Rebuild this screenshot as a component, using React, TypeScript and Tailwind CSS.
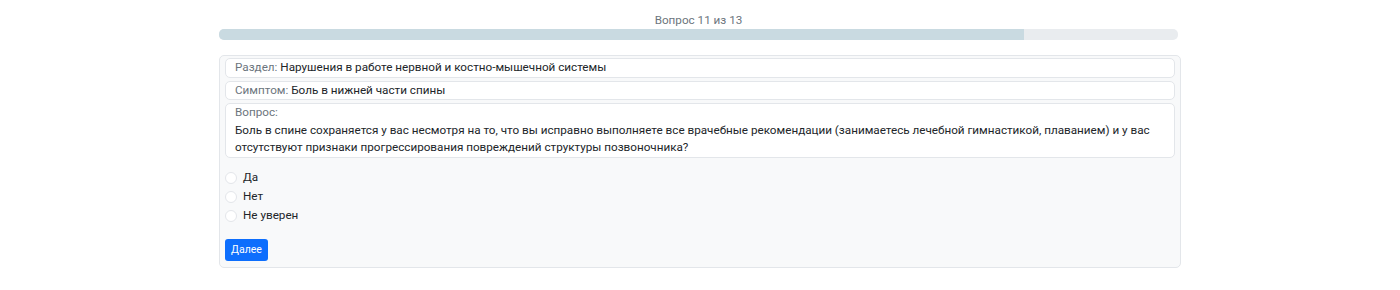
import React from "react";

function Radio({ label }: { label: string }) {
  return (
    <label className="flex items-center h-[19px] gap-[6px]">
      <span className="w-[12px] h-[12px] rounded-full border border-[#e3e6ea] bg-white" />
      <span className="text-[11.7px] text-[#212529]">{label}</span>
    </label>
  );
}

export default function App() {
  return (
    <div
      className="w-[1400px] h-[290px] bg-white"
      style={{ fontFamily: 'Roboto, "Noto Sans", sans-serif' }}
    >
      <div className="w-[962px] mx-auto pt-[12px]">
        <div className="w-[959px] text-center text-[11.7px] leading-[16px] text-[#6c757d]">Вопрос 11 из 13</div>
        <div className="mt-[1px] h-[11px] w-[959px] rounded-[5px] bg-[#e9ecef] overflow-hidden flex">
          <div className="w-[805px] h-full bg-[#c9dae1]" />
        </div>
        <div className="mt-[15px] w-[962px] rounded-[5px] border border-[#e3e6ea] bg-[#f8f9fa] px-[5px] pt-[2px] pb-[6px]">
          <div className="flex flex-col gap-[3px]">
            <div className="rounded-[5px] border border-[#e3e6ea] bg-white px-[9px] text-[11.7px] leading-[17.5px] text-[#212529]">
              <span className="text-[#6c757d]">Раздел: </span>Нарушения в работе нервной и костно-мышечной системы
            </div>
            <div className="rounded-[5px] border border-[#e3e6ea] bg-white px-[9px] text-[11.7px] leading-[17.5px] text-[#212529]">
              <span className="text-[#6c757d]">Симптом: </span>Боль в нижней части спины
            </div>
            <div className="rounded-[5px] border border-[#e3e6ea] bg-white px-[9px] text-[11.7px] leading-[17.5px] text-[#212529]">
              <div className="text-[#6c757d]">Вопрос:</div>
              <div>
                Боль в спине сохраняется у вас несмотря на то, что вы исправно выполняете все врачебные рекомендации (занимаетесь лечебной гимнастикой, плаванием) и у вас отсутствуют признаки прогрессирования повреждений структуры позвоночника?
              </div>
            </div>
          </div>
          <div className="mt-[11px] flex flex-col">
            <Radio label="Да" />
            <Radio label="Нет" />
            <Radio label="Не уверен" />
          </div>
          <button className="mt-[13px] h-[22px] w-[43px] rounded-[3px] bg-[#0d6efd] text-[10.5px] text-white flex items-center justify-center">
            Далее
          </button>
        </div>
      </div>
    </div>
  );
}
